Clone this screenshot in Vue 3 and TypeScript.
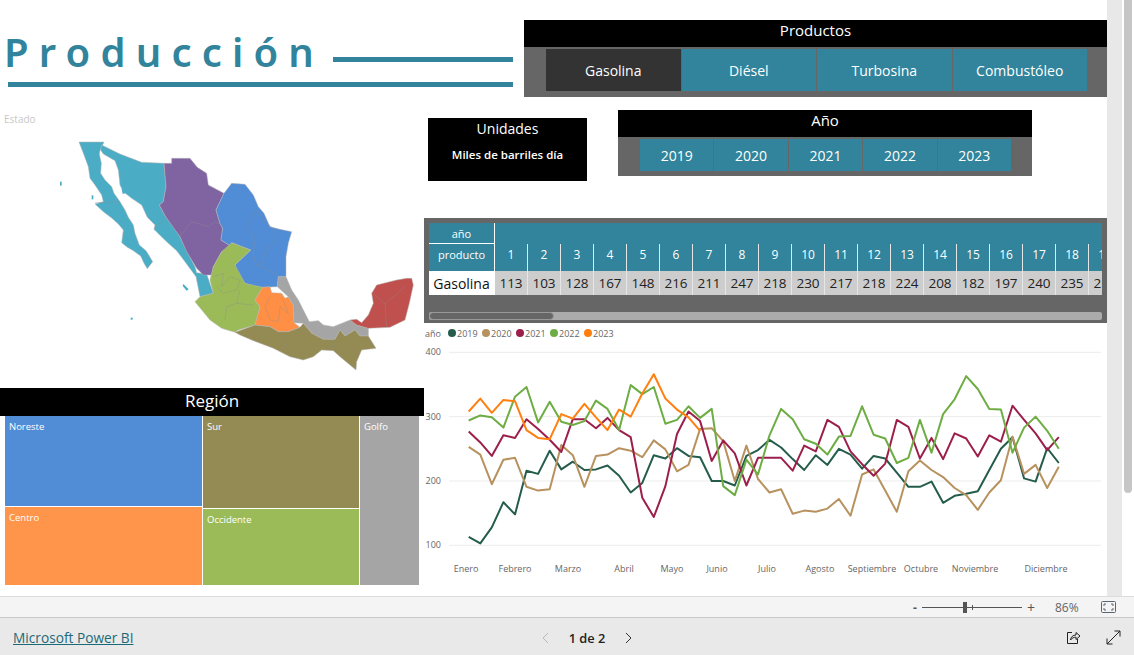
<script setup lang="ts">
const productos = [
  { name: 'Gasolina', active: true },
  { name: 'Diésel', active: false },
  { name: 'Turbosina', active: false },
  { name: 'Combustóleo', active: false },
]
const anios = [2019, 2020, 2021, 2022, 2023]

const semana = Array.from({ length: 19 }, (_, i) => i + 1)
const gasolina = [113, 103, 128, 167, 148, 216, 211, 247, 218, 230, 217, 218, 224, 208, 182, 197, 240, 235, 251]

const series = [
  { year: 2019, color: '#255c4c', values: [113, 103, 128, 167, 148, 216, 211, 247, 218, 230, 217, 218, 224, 208, 182, 197, 240, 235, 251, 239, 237, 200, 200, 193, 239, 248, 264, 252, 234, 217, 240, 225, 250, 241, 219, 239, 235, 213, 191, 191, 199, 166, 177, 180, 184, 217, 250, 268, 204, 199, 251, 228] },
  { year: 2020, color: '#b7925f', values: [253, 241, 195, 233, 236, 191, 185, 187, 256, 240, 191, 239, 241, 251, 247, 237, 263, 249, 215, 225, 281, 282, 262, 200, 255, 203, 182, 187, 149, 154, 152, 157, 172, 146, 210, 218, 185, 152, 215, 232, 217, 206, 189, 178, 155, 182, 201, 269, 211, 225, 189, 222] },
  { year: 2021, color: '#9c1f4b', values: [277, 260, 239, 271, 267, 296, 281, 264, 245, 296, 296, 282, 298, 279, 268, 174, 144, 192, 273, 308, 293, 231, 263, 243, 193, 236, 236, 236, 216, 255, 246, 295, 284, 246, 226, 208, 227, 295, 284, 235, 267, 234, 274, 266, 238, 271, 261, 317, 295, 274, 248, 268] },
  { year: 2022, color: '#6dad44', values: [294, 302, 299, 283, 331, 346, 291, 323, 292, 287, 293, 325, 312, 279, 349, 335, 346, 289, 295, 316, 298, 312, 192, 178, 233, 210, 271, 312, 296, 265, 258, 241, 269, 270, 316, 272, 266, 228, 236, 295, 244, 304, 327, 363, 343, 312, 311, 244, 283, 300, 278, 250] },
  { year: 2023, color: '#ff7f0f', values: [308, 328, 306, 326, 324, 279, 267, 265, 304, 297, 320, 299, 279, 311, 300, 336, 366, 328, 311, 299, 278] },
]

const ejeY = [400, 300, 200, 100]
const meses = [
  { label: 'Enero', x: 466 },
  { label: 'Febrero', x: 515 },
  { label: 'Marzo', x: 568 },
  { label: 'Abril', x: 624 },
  { label: 'Mayo', x: 672 },
  { label: 'Junio', x: 717 },
  { label: 'Julio', x: 767 },
  { label: 'Agosto', x: 820 },
  { label: 'Septiembre', x: 872 },
  { label: 'Octubre', x: 921 },
  { label: 'Noviembre', x: 975 },
  { label: 'Diciembre', x: 1046 },
]

// the svg starts at x=424, y=345 in the page
function yFor(v: number) {
  return 545.3 - (v - 100) * 0.6433 - 345
}
function linePoints(values: number[]) {
  return values.map((v, i) => `${(468.7 + i * 11.57 - 424).toFixed(1)},${yFor(v).toFixed(1)}`).join(' ')
}

const regiones = [
  { color: '#4bacc6', pts: '117,36 192,36 180,62 178,72 184,100 182,130 195,150 215,170 222,190 240,215 255,240 265,262 280,285 285,310 298,345 318,362 328,378 338,395 322,416 312,400 302,378 280,362 262,352 245,338 250,300 235,282 215,264 190,245 165,222 190,215 185,195 165,165 150,145 145,110 132,75' },
  { color: '#4bacc6', pts: '185,45 240,72 305,97 372,100 378,170 370,215 358,225 378,262 400,290 420,320 440,362 465,410 470,428 500,432 520,490 500,495 480,500 468,440 440,402 410,362 385,340 362,318 342,298 345,285 322,262 305,225 275,205 250,185 240,165 235,120 225,92 190,72 182,60' },
  { color: '#8064a2', pts: '372,100 395,100 395,85 450,85 472,112 500,130 505,165 552,190 528,240 540,280 548,295 543,330 575,350 545,365 520,410 515,435 490,435 470,415 440,365 420,320 378,262 358,225 370,215 378,170' },
  { color: '#518cd6', pts: '552,190 575,160 615,163 640,195 655,230 672,250 690,290 720,298 755,305 745,340 738,380 738,440 715,440 712,470 668,472 645,470 615,460 590,425 585,405 632,360 575,338 575,350 543,330 548,295 540,280 528,240' },
  { color: '#9bbb59', pts: '575,338 632,360 585,405 615,460 668,472 645,510 660,530 645,585 595,600 585,607 545,595 510,570 465,515 480,500 520,490 510,450 520,410 545,365' },
  { color: '#ff8f45', pts: '668,472 690,470 695,488 725,490 735,505 745,500 760,525 762,578 780,592 745,605 715,605 690,590 645,585 660,530 645,510' },
  { color: '#a5a5a5', pts: '715,440 738,440 755,480 775,510 790,540 808,575 835,572 850,585 880,590 910,578 930,570 950,585 985,595 985,618 960,618 945,600 915,618 900,600 885,628 850,628 815,610 790,580 762,578 760,525 745,500 712,470' },
  { color: '#948a54', pts: '585,607 645,585 690,590 715,605 745,605 780,592 790,580 815,610 850,628 885,628 900,600 915,618 945,600 960,618 985,618 1008,655 965,660 950,695 948,720 900,680 880,662 845,660 820,680 790,690 750,680 700,655 640,632 600,615' },
  { color: '#c0504d', pts: '930,570 950,568 965,578 985,555 1000,520 995,490 1010,465 1070,450 1100,445 1115,445 1120,465 1108,520 1095,570 1050,592 985,595 950,585' },
]

const limites = [
  'M165,218 L240,215',
  'M342,298 L378,262',
  'M420,318 L455,275 L505,290 L525,275 L548,285',
  'M620,285 L650,240 L680,280 L712,305 L712,325 L675,365 L665,410 L700,430 L715,440',
  'M620,285 L645,330 L640,375 L650,405 L665,410',
  'M520,440 L550,430 L545,470 L570,440 L600,450 L590,480 L550,490 L530,470',
  'M600,480 L590,520 L640,525 M590,520 L560,530 L555,570',
  'M690,500 L675,530 L690,570 L715,575 L720,530 L745,550 L730,510',
  'M725,620 L735,650 L720,660 M880,640 L875,660',
  'M1000,490 L1035,522 L1095,470 M1035,522 L1040,592',
]
</script>

<template>
  <div class="page">
    <div class="body">
      <main class="report">
        <section class="left">
          <div class="title-block">
            <div class="title-row">
              <h1 class="title">Producción</h1>
              <span class="rule short"></span>
            </div>
            <span class="rule long"></span>
          </div>
          <div class="estado">Estado</div>
          <svg class="map" viewBox="0 0 1170 774" width="390" height="258">
            <polygon v-for="(r, i) in regiones" :key="i" :points="r.pts" :fill="r.color" stroke="#b5b5b5" stroke-width="1.5" />
            <path v-for="(d, i) in limites" :key="'l' + i" :d="d" fill="none" stroke="#8d8d8d" stroke-width="1.5" opacity="0.7" />
            <g fill="#4bacc6">
              <rect x="60" y="155" width="5" height="12" />
              <rect x="155" y="196" width="5" height="12" />
              <polygon points="430,462 446,478 440,482 428,468" />
              <rect x="272" y="563" width="6" height="6" />
              <polygon points="245,178 258,170 260,188 248,192" />
            </g>
          </svg>
          <div class="region-head">Región</div>
          <div class="treemap">
            <div class="tm-col tm-a">
              <div class="tm-cell noreste">Noreste</div>
              <div class="tm-cell centro">Centro</div>
            </div>
            <div class="tm-col tm-b">
              <div class="tm-cell sur">Sur</div>
              <div class="tm-cell occidente">Occidente</div>
            </div>
            <div class="tm-col tm-c">
              <div class="tm-cell golfo">Golfo</div>
            </div>
          </div>
        </section>

        <section class="right">
          <div class="slicer productos">
            <div class="slicer-head">Productos</div>
            <div class="slicer-body">
              <button v-for="p in productos" :key="p.name" class="chip" :class="{ active: p.active }">{{ p.name }}</button>
            </div>
          </div>

          <div class="filters">
            <div class="unidades">
              <div class="unidades-title">Unidades</div>
              <div class="unidades-sub">Miles de barriles día</div>
            </div>
            <div class="slicer anio">
              <div class="slicer-head">Año</div>
              <div class="slicer-body">
                <button v-for="a in anios" :key="a" class="chip">{{ a }}</button>
              </div>
            </div>
          </div>

          <div class="matrix">
            <div class="matrix-scroll">
              <div class="m-row m-top">
                <div class="m-first">año</div>
                <div class="m-fill"></div>
              </div>
              <div class="m-row m-head">
                <div class="m-first">producto</div>
                <div v-for="n in semana" :key="n" class="m-cell">{{ n }}</div>
              </div>
              <div class="m-row m-data">
                <div class="m-first">Gasolina</div>
                <div v-for="(v, i) in gasolina" :key="i" class="m-cell">{{ v }}</div>
              </div>
            </div>
            <div class="m-bar"><div class="m-thumb"></div></div>
          </div>

          <div class="legend">
            <span class="legend-name">año</span>
            <span v-for="s in series" :key="s.year" class="legend-item">
              <i :style="{ background: s.color }"></i>{{ s.year }}
            </span>
          </div>

          <svg class="chart" width="683" height="235">
            <g v-for="v in ejeY" :key="v">
              <line x1="25" x2="677" :y1="yFor(v)" :y2="yFor(v)" stroke="#ececec" stroke-width="1" />
              <text x="17" :y="yFor(v) + 3" text-anchor="end" class="axis">{{ v }}</text>
            </g>
            <polyline v-for="s in series" :key="s.year" :points="linePoints(s.values)" fill="none" :stroke="s.color" stroke-width="2" stroke-linejoin="round" />
            <text v-for="m in meses" :key="m.label" :x="m.x - 424" y="227" text-anchor="middle" class="axis">{{ m.label }}</text>
          </svg>
        </section>
      </main>
      <div class="scrollbar">
        <div class="scroll-track"></div>
        <div class="scroll-thumb"></div>
      </div>
    </div>

    <div class="zoom-bar">
      <span class="z-sign">-</span>
      <div class="z-track"><span class="z-tick"></span><span class="z-thumb"></span></div>
      <span class="z-sign plus">+</span>
      <span class="z-pct">86%</span>
      <svg class="z-fit" width="15" height="12" viewBox="0 0 15 12" fill="none" stroke="#5b6670">
        <rect x="0.5" y="0.5" width="14" height="11" rx="1" />
        <path d="M3 5V3h2M10 3h2v2M3 7v2h2M12 7v2h-2" />
      </svg>
    </div>

    <footer class="footer">
      <a class="pbi-link" href="#">Microsoft Power BI</a>
      <div class="pager">
        <svg width="8" height="12" viewBox="0 0 8 12" fill="none" stroke="#b9b9b9"><path d="M7 1 2 6l5 5" /></svg>
        <span class="pager-text">1 de 2</span>
        <svg width="8" height="12" viewBox="0 0 8 12" fill="none" stroke="#333"><path d="m1 1 5 5-5 5" /></svg>
      </div>
      <div class="foot-icons">
        <svg width="15" height="15" viewBox="0 0 15 15" fill="none" stroke="#222">
          <path d="M6 2.500H1.500v11h10V9" />
          <path d="M4.500 10c.4-3.200 2.500-5 5.500-5V2.500L14 6l-4 3.500V7.200c-2.300 0-4 .9-5.500 2.800z" />
        </svg>
        <svg width="15" height="15" viewBox="0 0 15 15" fill="none" stroke="#222">
          <path d="M1 14 14 1M8.500 1H14v5.500M1 8.500V14h5.500" />
        </svg>
      </div>
    </footer>
  </div>
</template>

<style scoped>
.page {
  width: 1134px;
  height: 655px;
  display: flex;
  flex-direction: column;
  overflow: hidden;
  font-family: "Open Sans", "Noto Sans", sans-serif;
  background: #fff;
}

.body {
  display: flex;
  height: 596px;
}

.report {
  width: 1107px;
  display: grid;
  grid-template-columns: 424px 683px;
}

.scrollbar {
  width: 27px;
  display: flex;
  align-items: flex-start;
  gap: 2px;
}

.scroll-track {
  width: 15px;
  height: 100%;
  background: #e8e8e8;
}

.scroll-thumb {
  width: 8px;
  height: 493px;
  border-radius: 0 0 4px 4px;
  background: #c6c6c6;
}

.left {
  display: flex;
  flex-direction: column;
}

.title-block {
  height: 87px;
  padding: 27px 0 0 4px;
  box-sizing: border-box;
  width: 513px;
  position: relative;
  z-index: 1;
}

.title-row {
  display: flex;
  align-items: flex-start;
  height: 50px;
}

.title {
  margin: 0;
  width: 329px;
  font-family: "Noto Sans", sans-serif;
  font-size: 40px;
  font-weight: 600;
  letter-spacing: 10.2px;
  line-height: 50px;
  color: #31849b;
  white-space: nowrap;
}

.rule {
  display: block;
  background: #31849b;
}

.rule.short {
  width: 180px;
  height: 5px;
  margin-top: 30px;
}

.rule.long {
  width: 505px;
  height: 5px;
  margin: 5px 0 0 4px;
}

.estado {
  margin: 26px 0 0 4px;
  height: 13px;
  font-size: 10px;
  line-height: 13px;
  color: #c8c8c8;
}

.map {
  display: block;
  margin: 4px 0 0 40px;
}

.region-head {
  height: 28px;
  line-height: 26px;
  background: #000;
  color: #fff;
  text-align: center;
  font-size: 17px;
}

.treemap {
  display: flex;
  gap: 1px;
  width: 414px;
  height: 169px;
  margin-left: 5px;
}

.tm-col {
  display: flex;
  flex-direction: column;
  gap: 1px;
}

.tm-a { width: 197px; }
.tm-b { width: 156px; }
.tm-c { width: 59px; }

.tm-cell {
  padding: 4px 4px;
  font-size: 9.500px;
  line-height: 13px;
  color: #fff;
  box-sizing: border-box;
}

.noreste { height: 90px; background: #518cd6; }
.centro { flex: 1; background: #ff954a; }
.sur { height: 92px; background: #948a54; }
.occidente { flex: 1; background: #9bbb59; }
.golfo { flex: 1; background: #a5a5a5; }

.right {
  display: flex;
  flex-direction: column;
}

.slicer-head {
  background: #000;
  color: #fff;
  text-align: center;
  font-size: 15px;
  height: 27px;
  line-height: 20px;
}

.slicer-body {
  display: flex;
  gap: 1px;
  background: #666;
  box-sizing: border-box;
}

.chip {
  border: 0;
  padding: 0;
  background: #31849b;
  color: #fff;
  font-family: inherit;
  font-size: 14px;
}

.chip.active {
  background: #333;
}

.productos {
  width: 583px;
  margin: 20px 0 0 100px;
}

.productos .slicer-body {
  height: 50px;
  padding: 2px 20px 6px 22px;
}

.productos .chip {
  flex: 1;
}

.filters {
  display: flex;
  align-items: flex-start;
  height: 121px;
  padding-top: 13px;
  box-sizing: border-box;
}

.unidades {
  width: 159px;
  height: 63px;
  margin: 8px 0 0 4px;
  background: #000;
  color: #fff;
  text-align: center;
}

.unidades-title {
  font-size: 14px;
  line-height: 22px;
}

.unidades-sub {
  margin-top: 8px;
  font-size: 11.500px;
  font-weight: 600;
  line-height: 14px;
}

.anio {
  width: 414px;
  margin-left: 31px;
}

.anio .slicer-body {
  height: 39px;
  padding: 2px 21px 5px 22px;
}

.anio .chip {
  width: 74px;
}

.matrix {
  height: 105px;
  background: #666;
  padding: 5px 5px 0;
  box-sizing: border-box;
}

.matrix-scroll {
  width: 673px;
  height: 72px;
  overflow: hidden;
}

.m-row {
  display: flex;
  width: 800px;
}

.m-first {
  width: 66px;
  flex: none;
  text-align: center;
  box-sizing: border-box;
  border-right: 1px solid #fff;
}

.m-fill { flex: 1; background: #31849b; }

.m-top { height: 21px; }
.m-top .m-first {
  background: #31849b;
  color: #fff;
  font-size: 11px;
  line-height: 21px;
  border-bottom: 1px solid #fff;
}

.m-head { height: 27px; }
.m-head .m-first,
.m-head .m-cell {
  background: #31849b;
  color: #fff;
  font-size: 11px;
  line-height: 22px;
}

.m-head .m-cell {
  font-size: 12px;
}

.m-data { height: 24px; }
.m-data .m-first {
  background: #fff;
  color: #111;
  font-size: 14px;
  line-height: 25px;
}

.m-data .m-cell {
  background: #cdcdcd;
  color: #222;
  font-size: 13.500px;
  line-height: 25px;
}

.m-cell {
  width: 33px;
  flex: none;
  text-align: center;
  box-sizing: border-box;
  border-right: 1px solid #e6e6e6;
}

.m-bar {
  width: 673px;
  height: 8px;
  margin-top: 17px;
  border-radius: 2px;
  background: #ababab;
  overflow: hidden;
}

.m-thumb {
  width: 125px;
  height: 100%;
  border-radius: 4px;
  background: #666;
  border: 1px solid #999;
  box-sizing: border-box;
}

.legend {
  display: flex;
  align-items: center;
  height: 22px;
  padding: 0 0 2px 1px;
  box-sizing: border-box;
  font-size: 9px;
  color: #666;
}

.legend-name {
  width: 23px;
}

.legend-item {
  display: inline-flex;
  align-items: center;
  width: 34px;
}

.legend-item i {
  width: 8px;
  height: 8px;
  margin-right: 1px;
  border-radius: 50%;
}

.chart {
  display: block;
}

.axis {
  font-size: 9px;
  fill: #666;
}

.zoom-bar {
  height: 22px;
  display: flex;
  align-items: center;
  border-top: 1px solid #dcdcdc;
  border-bottom: 1px solid #c8c8c8;
  background: #f4f4f4;
  box-sizing: border-box;
  padding-left: 913px;
  font-size: 12px;
  color: #555;
}

.z-sign {
  width: 9px;
  font-weight: 700;
}

.z-sign.plus {
  width: 10px;
  margin-left: 5px;
  font-weight: 400;
  font-size: 14px;
}

.z-track {
  position: relative;
  width: 100px;
  height: 1px;
  background: #555;
}

.z-thumb {
  position: absolute;
  left: 41px;
  top: -5px;
  width: 4px;
  height: 11px;
  background: #555;
}

.z-tick {
  position: absolute;
  left: 50px;
  top: -2px;
  width: 1px;
  height: 5px;
  background: #555;
}

.z-pct {
  margin-left: 18px;
  color: #666;
}

.z-fit {
  margin-left: 22px;
}

.footer {
  flex: 1;
  display: grid;
  grid-template-columns: 1fr auto 1fr;
  align-items: center;
  padding: 2px 13px 0;
  background: #e9e9e9;
}

.pbi-link {
  color: #1c6a78;
  font-size: 13.700px;
  font-weight: 500;
}

.pager {
  display: flex;
  align-items: center;
  gap: 20px;
  margin-left: 40px;
  font-size: 12.800px;
  font-weight: 600;
  color: #222;
}

.foot-icons {
  display: flex;
  justify-content: flex-end;
  align-items: center;
  gap: 25px;
}
</style>

<style>
html, body {
  margin: 0;
  overflow: hidden;
}
</style>
